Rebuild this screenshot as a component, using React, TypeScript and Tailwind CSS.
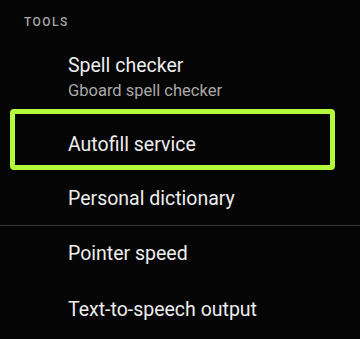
export default function App() {
  return (
    <div
      className="relative w-[360px] h-[339px] overflow-hidden bg-[#050505] text-[#ededed]"
      style={{ fontFamily: 'Roboto, "Noto Sans", Arial, sans-serif' }}
    >
      <div className="h-[44px] pl-6 pt-[15px] text-[12px] leading-[14px] font-medium tracking-[0.12em] text-[#a6a6a6]">
        TOOLS
      </div>
      <div className="h-[73px] pl-[68px] flex flex-col justify-center gap-[4px] pb-[6px]">
        <div className="text-[19.5px] leading-[22px]">Spell checker</div>
        <div className="text-[16.5px] leading-[19px] text-[#a9a9a9]">Gboard spell checker</div>
      </div>
      <div className="h-[55px] pl-[68px] flex items-center text-[19.5px] leading-[22px]">
        Autofill service
      </div>
      <div className="h-[53px] pl-[68px] flex items-center text-[19.5px] leading-[22px]">
        Personal dictionary
      </div>
      <div className="h-px bg-[#383838]" />
      <div className="h-[56px] pl-[68px] flex items-center text-[19.5px] leading-[22px]">
        Pointer speed
      </div>
      <div className="h-[55px] pl-[68px] flex items-center text-[19.5px] leading-[22px]">
        Text-to-speech output
      </div>
      <div className="absolute left-[10px] top-[109px] w-[325px] h-[61px] border-[5px] border-[#b3fb3c] rounded-[4px]" />
    </div>
  );
}
